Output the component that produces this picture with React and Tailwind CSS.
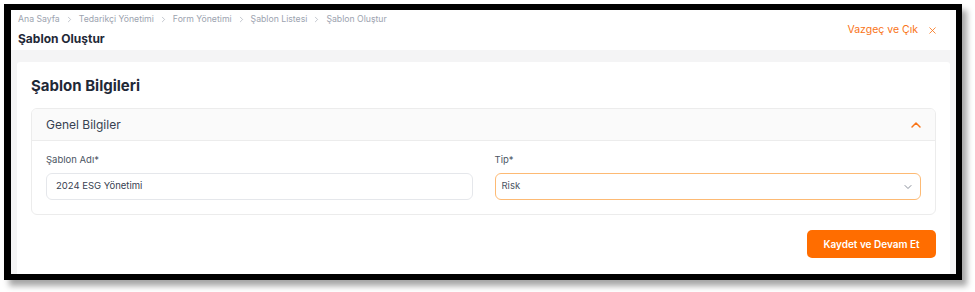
import { ChevronRight, ChevronUp, ChevronDown, X } from "lucide-react";

const crumbs = ["Ana Sayfa", "Tedarikçi Yönetimi", "Form Yönetimi", "Şablon Listesi", "Şablon Oluştur"];

export default function App() {
  return (
    <div className="w-[975px] h-[292px] bg-white pt-[4px] pl-[4px] font-['Inter',sans-serif]">
      <div className="w-[958px] h-[276px] border-[6px] border-l-[7px] border-black shadow-[5px_6px_6px_rgba(0,0,0,0.35)] flex flex-col bg-[#f4f4f5] overflow-hidden">
        {/* header */}
        <div className="h-[40px] shrink-0 bg-white flex items-start justify-between pl-[7px] pr-[18px]">
          <div className="pt-[3px]">
            <div className="flex items-center gap-[5px] text-[8.7px] leading-[12px] text-[#9ca3af]">
              {crumbs.map((c, i) => (
                <span key={c} className="flex items-center gap-[5px]">
                  {i > 0 && <ChevronRight size={9} strokeWidth={1.6} />}
                  {c}
                </span>
              ))}
            </div>
            <div className="mt-[7px] text-[12px] leading-[14px] font-bold text-[#1f2937]">Şablon Oluştur</div>
          </div>
          <button className="mt-[13px] flex items-center gap-[9px] text-[10.5px] leading-[14px] text-[#f97316]">
            Vazgeç ve Çık
            <X size={11} strokeWidth={1.8} />
          </button>
        </div>

        {/* card */}
        <div className="mt-[12px] mx-[6px] flex-1 bg-white rounded-t-[3px] px-[14px] pt-[14px]">
          <h2 className="text-[15px] leading-[20px] font-bold text-[#1f2937]">Şablon Bilgileri</h2>
          <div className="mt-[12px] border border-[#ececec] rounded-[6px] overflow-hidden">
            <div className="h-[32px] bg-[#fafafa] border-b border-[#ececec] flex items-center justify-between pl-[14px] pr-[11px]">
              <span className="text-[12px] text-[#374151]">Genel Bilgiler</span>
              <ChevronUp size={16} strokeWidth={2.2} className="text-[#f97316]" />
            </div>
            <div className="grid grid-cols-2 gap-x-[22px] px-[14px] pt-[13px] pb-[14px]">
              <div>
                <label className="block text-[9.5px] leading-[12px] text-[#4b5563]">Şablon Adı*</label>
                <div className="mt-[7px] h-[27px] border border-[#e5e7eb] rounded-[6px] flex items-center px-[9px] text-[9.5px] text-[#374151]">
                  2024 ESG Yönetimi
                </div>
              </div>
              <div>
                <label className="block text-[9.5px] leading-[12px] text-[#4b5563]">Tip*</label>
                <div className="mt-[7px] h-[27px] border border-[#fdba74] rounded-[6px] flex items-center justify-between pl-[6px] pr-[6px] text-[9.5px] text-[#4b5563]">
                  Risk
                  <ChevronDown size={12} strokeWidth={1.6} className="text-[#6b7280]" />
                </div>
              </div>
            </div>
          </div>
          <div className="flex justify-end mt-[15px]">
            <button className="w-[129px] h-[28px] rounded-[5px] bg-[#ff6d00] text-white text-[10px] font-semibold">
              Kaydet ve Devam Et
            </button>
          </div>
        </div>
      </div>
    </div>
  );
}
